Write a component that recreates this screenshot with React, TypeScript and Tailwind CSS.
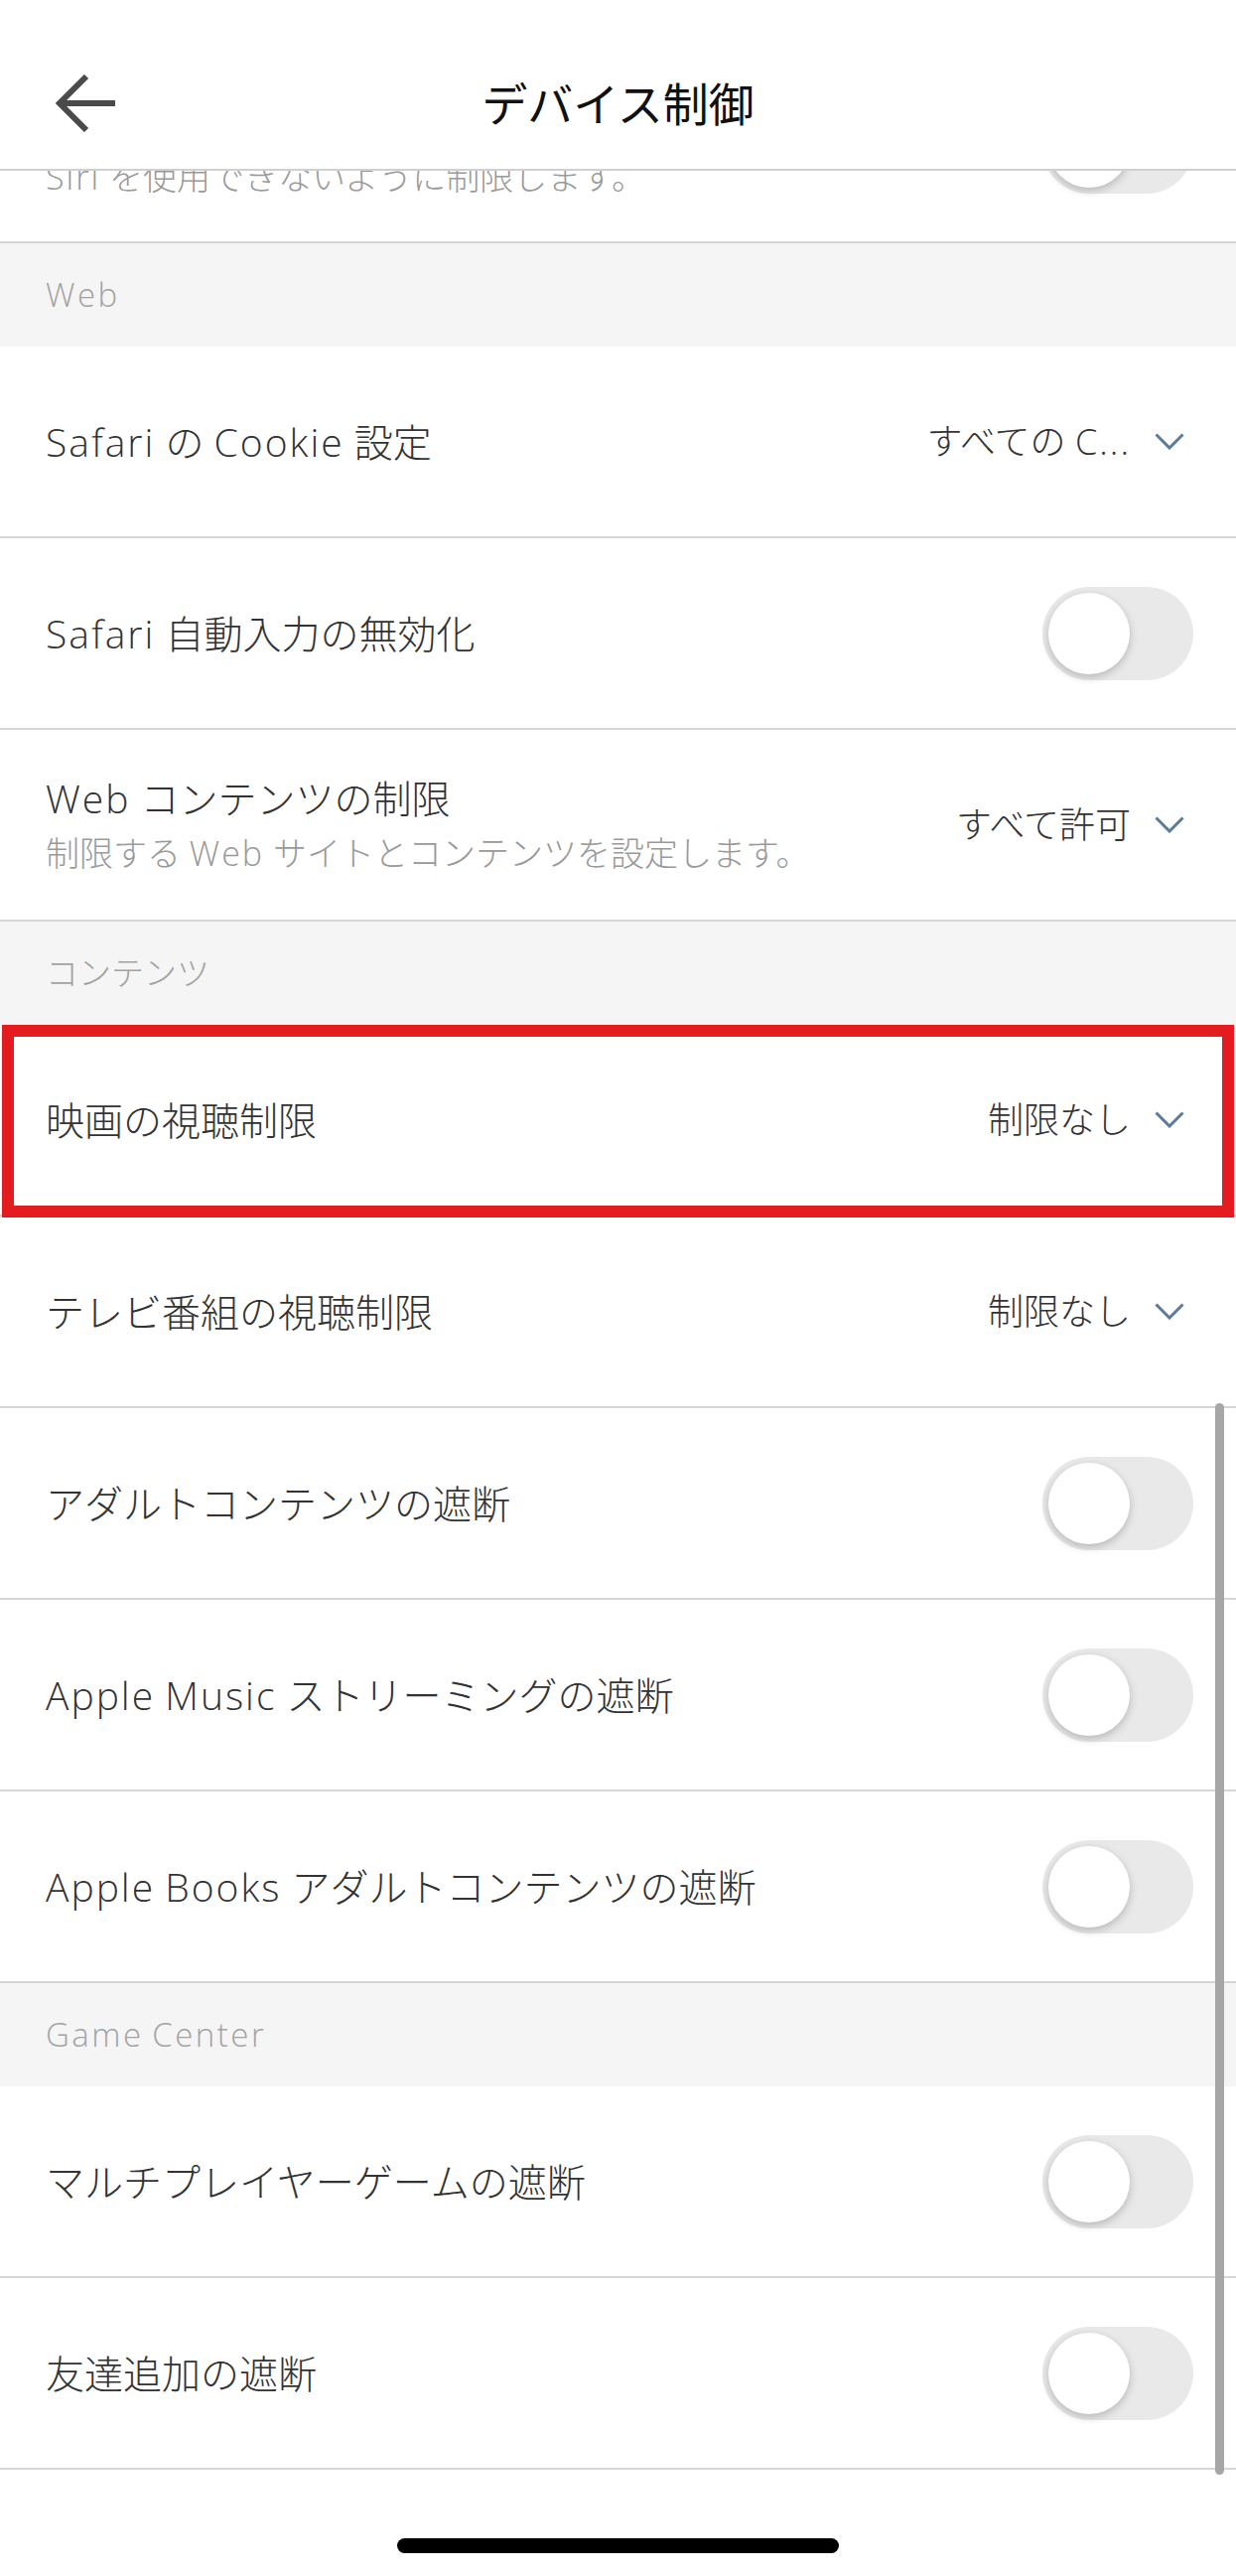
import React from 'react';

type Item =
  | { kind: 'section'; label: string }
  | { kind: 'select'; title: string; sub?: string; value: string; marked?: boolean }
  | { kind: 'toggle'; title: string; sub?: string };

const items: Item[] = [
  { kind: 'section', label: 'Web' },
  { kind: 'select', title: 'Safari の Cookie 設定', value: 'すべての C...' },
  { kind: 'toggle', title: 'Safari 自動入力の無効化' },
  { kind: 'select', title: 'Web コンテンツの制限', sub: '制限する Web サイトとコンテンツを設定します。', value: 'すべて許可' },
  { kind: 'section', label: 'コンテンツ' },
  { kind: 'select', title: '映画の視聴制限', value: '制限なし', marked: true },
  { kind: 'select', title: 'テレビ番組の視聴制限', value: '制限なし' },
  { kind: 'toggle', title: 'アダルトコンテンツの遮断' },
  { kind: 'toggle', title: 'Apple Music ストリーミングの遮断' },
  { kind: 'toggle', title: 'Apple Books アダルトコンテンツの遮断' },
  { kind: 'section', label: 'Game Center' },
  { kind: 'toggle', title: 'マルチプレイヤーゲームの遮断' },
  { kind: 'toggle', title: '友達追加の遮断' },
];

// latin runs are set a bit looser than the CJK ones, like the iOS font
const Txt = ({ text, wide = false }: { text: string; wide?: boolean }) => (
  <span>
    {text.split(/([A-Za-z0-9.]+)/).map((part, i) =>
      i % 2 === 1 ? (
        <span key={i} className={wide ? 'tracking-[2.5px]' : 'tracking-[2px]'}>
          {part}
        </span>
      ) : (
        <React.Fragment key={i}>{part}</React.Fragment>
      )
    )}
  </span>
);

const Toggle = () => (
  <div className="w-[152px] h-[94px] rounded-full bg-[#e9e9e9] p-[6px] flex items-center shrink-0">
    <div className="w-[82px] h-[82px] rounded-full bg-white shadow-[0_3px_8px_rgba(0,0,0,0.22)]" />
  </div>
);

const Chevron = () => (
  <svg width="30" height="17" viewBox="0 0 30 17" fill="none" className="shrink-0">
    <path d="M1.5 1.5 L15 15 L28.5 1.5" stroke="#5a7b9c" strokeWidth="3" />
  </svg>
);

const Title = ({ title, sub }: { title: string; sub?: string }) => (
  <div className="flex flex-col">
    <span className="text-[39px] leading-[50px] text-[#333]">
      <Txt text={title} />
    </span>
    {sub && (
      <span className="mt-[7px] text-[34px] leading-[46px] text-[#9a9a9a]">
        <Txt text={sub} />
      </span>
    )}
  </div>
);

const Row = ({ item }: { item: Item }) => {
  if (item.kind === 'section') {
    return (
      <div className="h-[104px] bg-[#f5f5f5] flex items-center pl-[46px] text-[33px] text-[#a3a3a3]">
        <Txt text={item.label} wide />
      </div>
    );
  }
  return (
    <div className="relative h-[193px] border-b-2 border-[#d6d6d6] flex items-center justify-between pl-[46px] pr-[43px]">
      <Title title={item.title} sub={item.sub} />
      {item.kind === 'toggle' ? (
        <Toggle />
      ) : (
        <div className="flex items-center gap-[24px] mr-[9px]">
          <span className="text-[36px] text-[#333]">
            <Txt text={item.value} />
          </span>
          <Chevron />
        </div>
      )}
      {item.kind === 'select' && item.marked && (
        <div className="absolute left-[2px] right-[2px] top-0 -bottom-[3px] border-[12px] border-[#e41c1f]" />
      )}
    </div>
  );
};

export default function App() {
  return (
    <div className="relative w-[1245px] h-[2594px] bg-white flex flex-col overflow-hidden font-light font-['Open_Sans','Noto_Sans_CJK_JP',sans-serif]">
      {/* header */}
      <div className="h-[172px] border-b-2 border-[#d0d0d0] flex items-center pt-[38px] shrink-0">
        <div className="w-[160px] pl-[56px]">
          <svg width="62" height="58" viewBox="0 0 62 58" fill="none">
            <path d="M3 29 H60" stroke="#4a4a4a" strokeWidth="6" />
            <path d="M31 2 L4 29 L31 56" stroke="#4a4a4a" strokeWidth="6" />
          </svg>
        </div>
        <div className="flex-1 text-center text-[46px] font-normal text-[#111]">デバイス制御</div>
        <div className="w-[160px]" />
      </div>

      {/* partly scrolled-away Siri row */}
      <div className="h-[73px] border-b-2 border-[#d6d6d6] overflow-hidden flex items-start justify-between pl-[46px] pr-[43px] shrink-0">
        <span className="-mt-[17px] text-[34px] leading-[46px] text-[#9a9a9a]">
          <Txt text="Siri を使用できないように制限します。" />
        </span>
        <div className="-mt-[71px]">
          <Toggle />
        </div>
      </div>

      <div className="shrink-0">
        {items.map((it, i) => (
          <Row key={i} item={it} />
        ))}
      </div>

      <div className="flex-1 flex items-end justify-center pb-[23px]">
        <div className="w-[445px] h-[15px] rounded-full bg-black" />
      </div>

      {/* scroll indicator */}
      <div className="absolute left-[1224px] top-[1413px] w-[9px] h-[1079px] rounded-full bg-[#a6a6a6]" />
    </div>
  );
}
